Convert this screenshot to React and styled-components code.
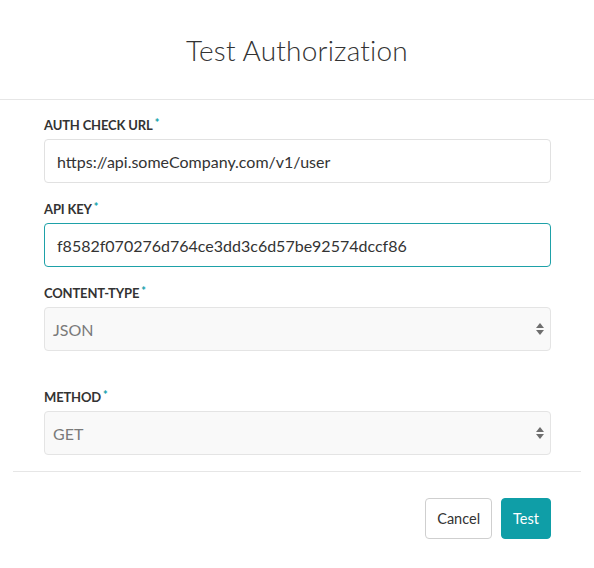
import React from 'react'
import styled, { createGlobalStyle } from 'styled-components'

const GlobalStyle = createGlobalStyle`
  html, body {
    margin: 0;
    padding: 0;
    background: #fff;
  }
  body {
    font-family: Lato, 'Open Sans', sans-serif;
    color: #333;
  }
`

const Modal = styled.div`
  width: 594px;
  height: 568px;
  background: #fff;
  display: flex;
  flex-direction: column;
`

const Header = styled.header`
  height: 99px;
  border-bottom: 1px solid #e6e6e6;
  display: flex;
  align-items: center;
  justify-content: center;
`

const Title = styled.h2`
  margin: 0;
  font-size: 28px;
  font-weight: 300;
  color: #333;
  letter-spacing: 0.2px;
`

const Body = styled.div`
  padding: 17px 43px 16px 44px;
`

const Field = styled.div`
  margin-bottom: ${({ $spaced }) => ($spaced ? '38px' : '18px')};

  &:last-child {
    margin-bottom: 0;
  }
`

const Label = styled.label`
  display: block;
  height: 16px;
  line-height: 16px;
  margin-bottom: 6px;
  font-size: 13px;
  font-weight: 700;
  letter-spacing: -0.15px;
  color: #333;
  text-transform: uppercase;
`

const Required = styled.span`
  color: #17a2ad;
  margin-left: 2px;
  font-size: 11px;
  font-weight: 900;
  vertical-align: top;
  position: relative;
  top: -2px;
`

const Input = styled.input`
  box-sizing: border-box;
  width: 100%;
  height: 44px;
  padding: 0 12px;
  font-family: Lato, sans-serif;
  font-size: 16px;
  color: #333;
  background: #fff;
  border: 1px solid ${({ $focused }) => ($focused ? '#1ea1a8' : '#e1e1e1')};
  border-radius: 4px;
  outline: none;
`

const SelectBox = styled.div`
  box-sizing: border-box;
  height: 44px;
  padding: 0 5px 0 8px;
  display: flex;
  align-items: center;
  justify-content: space-between;
  background: #f9f9f9;
  border: 1px solid #e4e4e4;
  border-radius: 4px;
  font-size: 16px;
  color: #7a7a7a;
`

const Arrows = styled.svg`
  width: 10px;
  height: 14px;
`

const Footer = styled.footer`
  margin: 0 13px;
  border-top: 1px solid #e6e6e6;
  padding: 26px 30px 0 0;
  display: flex;
  justify-content: flex-end;
  gap: 9px;
`

const Button = styled.button`
  height: 41px;
  padding: 0 11px;
  font-family: Lato, sans-serif;
  font-size: 14.5px;
  border-radius: 4px;
  cursor: pointer;
  color: ${({ $primary }) => ($primary ? '#fff' : '#333')};
  background: ${({ $primary }) => ($primary ? '#0f9ea7' : '#fff')};
  border: 1px solid ${({ $primary }) => ($primary ? '#0f9ea7' : '#cfcfcf')};
`

const Select = ({ value }) => (
  <SelectBox>
    <span>{value}</span>
    <Arrows viewBox="0 0 10 14">
      <path d="M5 1 L9 6 L1 6 Z" fill="#6e6e6e" />
      <path d="M5 13 L9 8 L1 8 Z" fill="#6e6e6e" />
    </Arrows>
  </SelectBox>
)

const Star = () => <Required>*</Required>

export default function App() {
  return (
    <>
      <GlobalStyle />
      <Modal>
        <Header>
          <Title>Test Authorization</Title>
        </Header>
        <Body>
          <Field>
            <Label>Auth Check URL<Star /></Label>
            <Input defaultValue="https://api.someCompany.com/v1/user" />
          </Field>
          <Field>
            <Label>API Key<Star /></Label>
            <Input $focused defaultValue="f8582f070276d764ce3dd3c6d57be92574dccf86" />
          </Field>
          <Field $spaced>
            <Label>Content-Type<Star /></Label>
            <Select value="JSON" />
          </Field>
          <Field>
            <Label>Method<Star /></Label>
            <Select value="GET" />
          </Field>
        </Body>
        <Footer>
          <Button>Cancel</Button>
          <Button $primary>Test</Button>
        </Footer>
      </Modal>
    </>
  )
}
